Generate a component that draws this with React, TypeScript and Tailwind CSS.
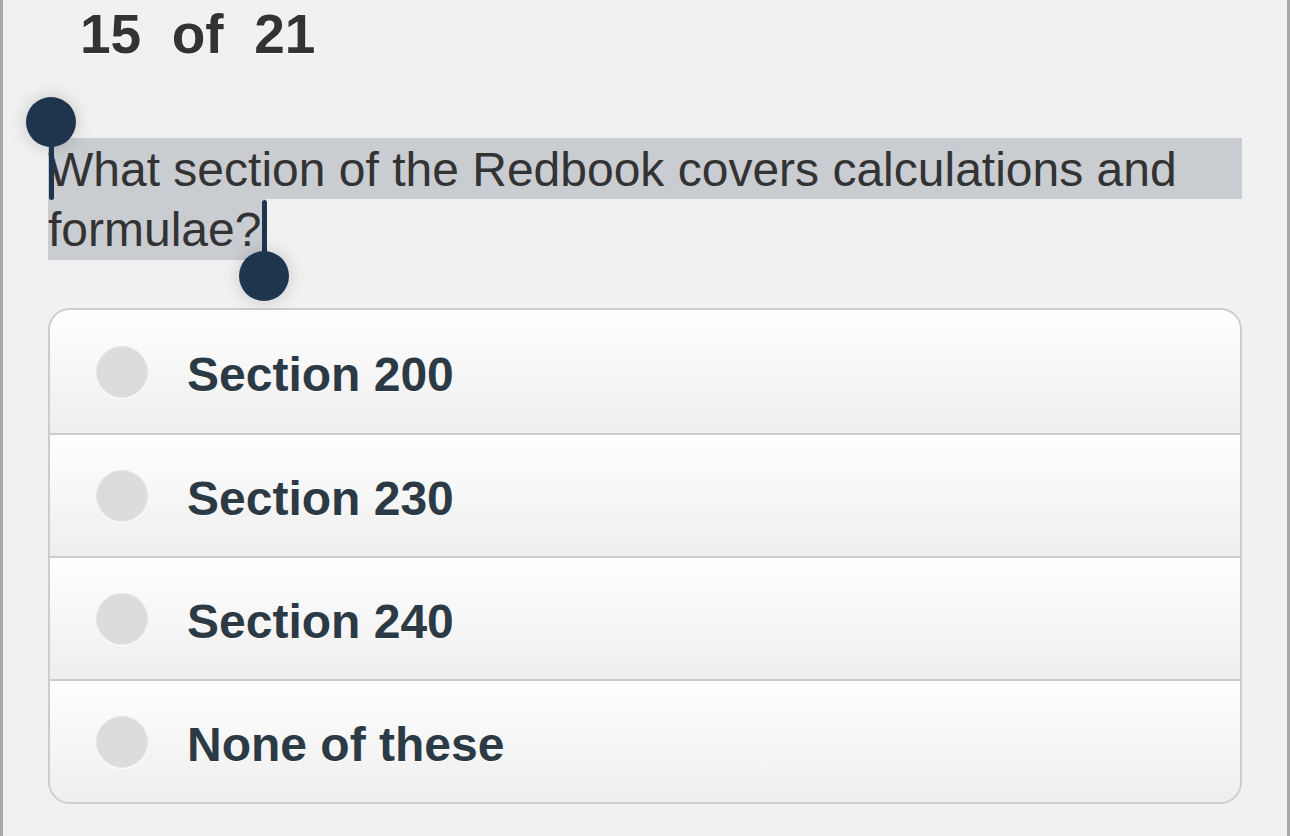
import React from 'react';

const options = ['Section 200', 'Section 230', 'Section 240', 'None of these'];

function Handle({ className }: { className: string }) {
  return <div className={`absolute h-[50px] w-[50px] rounded-full bg-[#1f344d] shadow-[0_0_18px_rgba(0,0,0,0.18)] ${className}`} />;
}

export default function App() {
  return (
    <div
      className="h-[836px] overflow-hidden border-x-[3px] border-[#a8a8a8] bg-[#f1f1f1]"
      style={{ fontFamily: '"Liberation Sans", Arial, Helvetica, sans-serif' }}
    >
      <header className="pl-[77px] pt-[6px]">
        <h1 className="whitespace-pre text-[55px] font-bold leading-[56px] text-[#333] [text-shadow:0_1px_0_#fff]">15  of  21</h1>
      </header>

      {/* question with an active text selection */}
      <div className="relative mx-[45px] mt-[76px] text-[48px] leading-[61px] text-[#333]">
        <div className="bg-[#c9ccd1] pt-[2px] leading-[59px]">What section of the Redbook covers calculations and</div>
        <span className="inline-block bg-[#c9ccd1] pr-[5px]">formulae?</span>

        {/* selection handles */}
        <Handle className="-left-[22px] -top-[41px]" />
        <div className="absolute left-[1px] top-[2px] h-[60px] w-[5px] rounded-b-full bg-[#1f344d]" />

        <div className="absolute left-[214px] top-[62px] h-[62px] w-[5px] rounded-t-full bg-[#1f344d]" />
        <Handle className="left-[191px] top-[113px]" />
      </div>

      <div className="mx-[45px] mt-[48px] overflow-hidden rounded-[22px] border-2 border-[#cccccc]">
        {options.map((label, i) => (
          <div
            key={label}
            className={`flex h-[123px] items-center bg-linear-to-b from-white to-[#eeeeee] pl-[46px] ${i > 0 ? 'border-t-2 border-[#cccccc]' : ''}`}
          >
            <span className="h-[52px] w-[52px] shrink-0 rounded-full border border-[#e4e4e4] bg-[#dcdcdc] shadow-[0_1px_0_#fff]" />
            <span className="ml-[39px] pt-[6px] text-[48px] font-bold text-[#2c3a46] [text-shadow:0_1px_0_#fff]">{label}</span>
          </div>
        ))}
      </div>
    </div>
  );
}
